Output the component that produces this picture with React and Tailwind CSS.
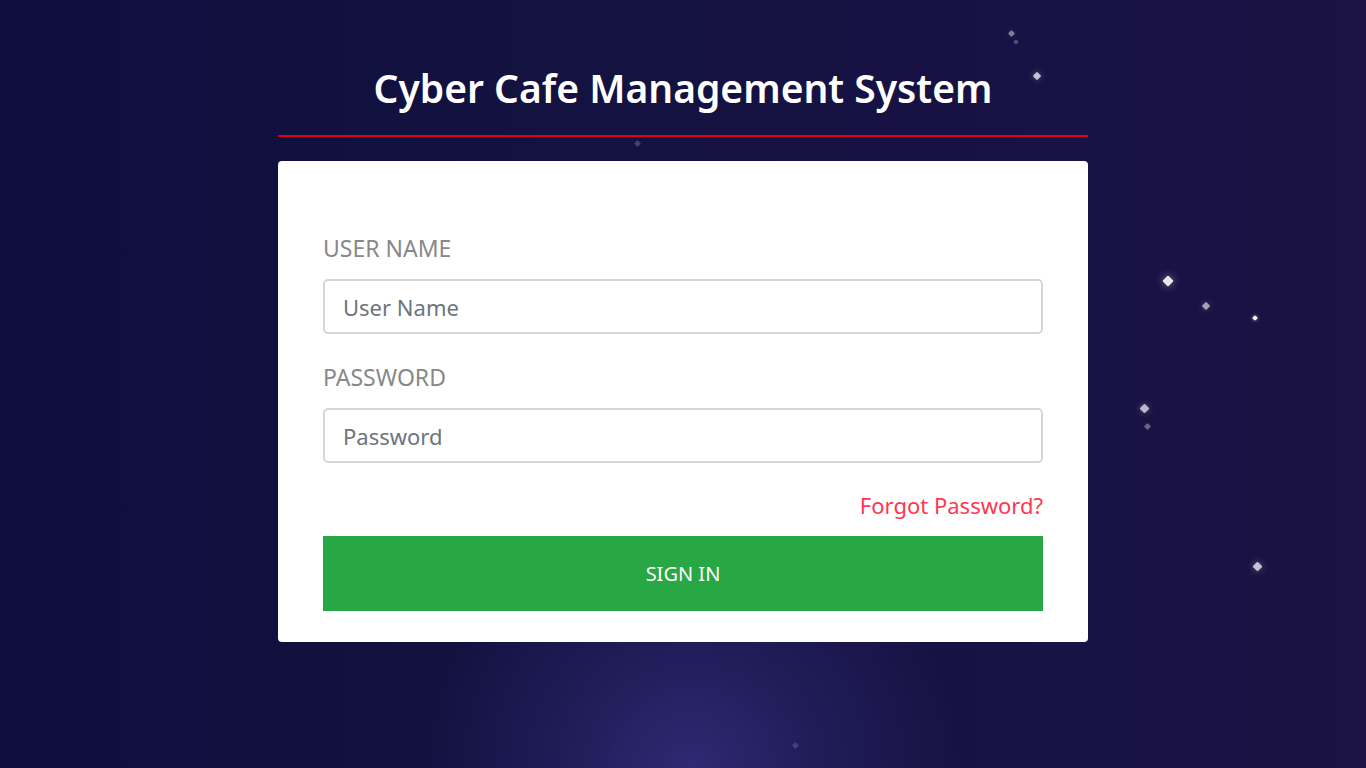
import React from "react";

const stars = [
  { x: 1011, y: 33, s: 5, o: 0.45 },
  { x: 1016, y: 42, s: 4, o: 0.25 },
  { x: 1037, y: 76, s: 6, o: 0.75 },
  { x: 1168, y: 281, s: 8, o: 0.9 },
  { x: 1206, y: 306, s: 6, o: 0.6 },
  { x: 1255, y: 318, s: 4, o: 1 },
  { x: 1144, y: 408, s: 7, o: 0.7 },
  { x: 1147, y: 426, s: 5, o: 0.35 },
  { x: 1257, y: 566, s: 7, o: 0.75 },
  { x: 637, y: 143, s: 5, o: 0.2 },
  { x: 795, y: 745, s: 5, o: 0.15 },
];

export default function App() {
  return (
    <div
      className="relative min-h-[768px] w-full overflow-hidden bg-[linear-gradient(90deg,#0e0f3f_0%,#131240_40%,#181244_70%,#1c1244_100%)]"
      style={{ fontFamily: '"Noto Sans", "Open Sans", Arial, sans-serif' }}
    >
      <div className="pointer-events-none absolute left-[420px] top-[500px] h-[540px] w-[540px] rounded-full bg-[radial-gradient(ellipse_at_center,rgba(50,44,120,0.9)_0%,rgba(40,36,105,0.55)_35%,rgba(30,28,90,0)_70%)]" />
      {stars.map((st, i) => (
        <div
          key={i}
          className="pointer-events-none absolute rotate-45 rounded-[1px] bg-white"
          style={{
            left: st.x - st.s / 2,
            top: st.y - st.s / 2,
            width: st.s,
            height: st.s,
            opacity: st.o,
            boxShadow: `0 0 ${st.s}px rgba(255,255,255,${st.o * 0.6})`,
          }}
        />
      ))}
      <div className="relative mx-auto w-[810px] pt-[61px]">
        <h1 className="text-center text-[39px] font-semibold leading-[54px] text-white">
          Cyber Cafe Management System
        </h1>
        <div className="mt-[20px] h-[2px] bg-[#e3000f]" />
        <div className="mt-[24px] rounded-[4px] bg-white px-[45px] pb-[31px] pt-[72px]">
          <label className="block text-[23px] leading-[31px] text-[#888888]">USER NAME</label>
          <input
            className="mt-[15px] block h-[55px] w-full rounded-[5px] border-2 border-[#d3d6db] px-[18px] text-[22px] text-[#495057] placeholder:text-[#6c757d] outline-none"
            placeholder="User Name"
          />
          <label className="mt-[28px] block text-[23px] leading-[31px] text-[#888888]">PASSWORD</label>
          <input
            type="password"
            className="mt-[15px] block h-[55px] w-full rounded-[5px] border-2 border-[#d3d6db] px-[18px] text-[22px] text-[#495057] placeholder:text-[#6c757d] outline-none"
            placeholder="Password"
          />
          <div className="mt-[26px] flex justify-end">
            <a className="text-[22px] leading-[32px] text-[#ff3850]" href="#">
              Forgot Password?
            </a>
          </div>
          <button className="mt-[15px] block h-[75px] w-full bg-[#28a745] text-[20px] text-white">
            SIGN IN
          </button>
        </div>
      </div>
    </div>
  );
}
